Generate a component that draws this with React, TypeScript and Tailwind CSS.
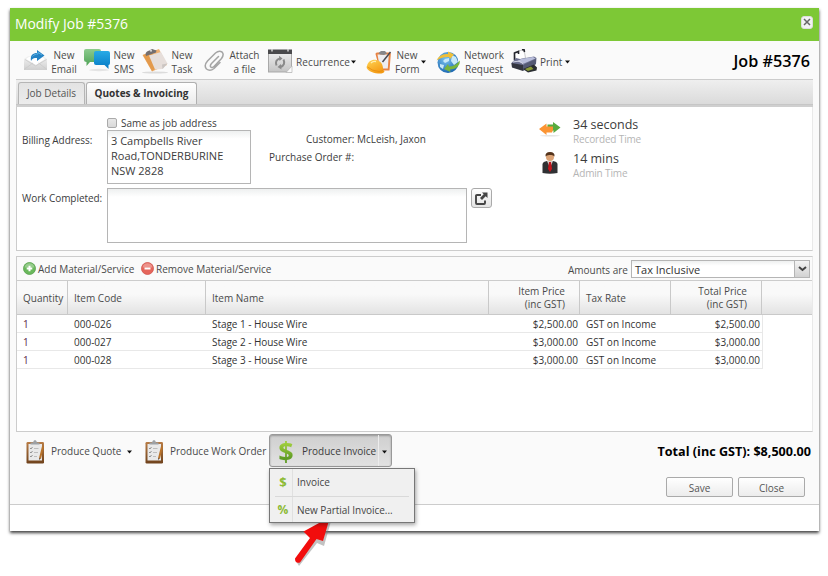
import React from "react";

type IconProps = { className?: string };

const EmailIcon = ({ className }: IconProps) => (
  <svg className={className} width="24" height="24" viewBox="0 0 24 24">
    <defs>
      <linearGradient id="env" x1="0" y1="0" x2="0" y2="1">
        <stop offset="0" stopColor="#f4f4f4" />
        <stop offset="1" stopColor="#cfcfcf" />
      </linearGradient>
    </defs>
    <path d="M0 11 L4 8 L19 8 L23 11 V22 H0Z" fill="url(#env)" />
    <path d="M2 11 L12 17 L21 11 L18 9 H5Z" fill="#fff" />
    <path d="M0 21.500 L9 15 M23 21.500 L14.500 15 M1 11.500 L11.500 18 L22.500 11.500" stroke="#cacaca" strokeWidth="0.800" fill="none" />
    <path d="M7 13 C6 7 9 5 13 5 V2 L20.500 7.500 L13 13 V10 C10 10 8 10.500 7 13Z" fill="#2482c4" />
    <path d="M8.500 8.500 C10 6.500 12 6 14 6 V4.500 L18 7" stroke="#5cb0e2" fill="none" />
  </svg>
);

const SmsIcon = ({ className }: IconProps) => (
  <svg className={className} width="27" height="24" viewBox="0 0 27 24">
    <defs>
      <linearGradient id="smsg" x1="0" y1="0" x2="0" y2="1">
        <stop offset="0" stopColor="#8ccb8e" />
        <stop offset="1" stopColor="#4fa356" />
      </linearGradient>
      <linearGradient id="smsb" x1="0" y1="0" x2="0" y2="1">
        <stop offset="0" stopColor="#28abe6" />
        <stop offset="1" stopColor="#0579c4" />
      </linearGradient>
    </defs>
    <ellipse cx="15" cy="22" rx="10" ry="1.200" fill="#e4e4e4" />
    <path d="M2 1 H15 Q17 1 17 3 V14 H6 L2.500 18 V14 Q0 14 0 12 V3 Q0 1 2 1Z" fill="url(#smsg)" />
    <path d="M12 3 H24 Q26 3 26 5 V15 Q26 17 24.500 17 V21 L20.500 17 H12 Q10 17 10 15 V5 Q10 3 12 3Z" fill="url(#smsb)" />
  </svg>
);

const TaskIcon = ({ className }: IconProps) => (
  <svg className={className} width="27" height="26" viewBox="0 0 27 26">
    <ellipse cx="13" cy="24.500" rx="13" ry="1" fill="#dcdcdc" />
    <path d="M0.500 7 L17 1 L25 17 L10 23.500Z" fill="#efb070" />
    <path d="M1 7 L10 4 L16 19 L10 23Z" fill="#e39a4c" />
    <path d="M7 7.500 L19 4 L25.500 15.500 L20.500 21 L13 21.500Z" fill="#e6deda" />
    <path d="M20.500 21 L20 16.500 L25.500 15.500Z" fill="#cbc5c2" />
    <path d="M3.500 6 Q4 3 7.500 2.500 Q10 0 11.500 1.500 L14.500 2.500 L14 4.500 L4 8Z" fill="#746f70" />
    <circle cx="9" cy="2.700" r="1" fill="#ddd" />
  </svg>
);

const ClipIcon = ({ className }: IconProps) => (
  <svg className={className} width="22" height="24" viewBox="0 0 22 24" fill="none" stroke="#a5a5a5" strokeWidth="1.500" strokeLinecap="round">
    <path d="M14.500 7.500 L7.500 14.500 Q5.500 17 7 18.200 Q8.700 19 10.500 17 L17.500 9.500 Q20.500 5.500 18 3 Q15 1.200 11.500 4 L3.500 12 Q-0.500 16.500 2.500 20 Q6 22.800 10 19.500 L16 13.500" />
  </svg>
);

const RecurIcon = ({ className }: IconProps) => (
  <svg className={className} width="25" height="25" viewBox="0 0 25 25">
    <defs>
      <linearGradient id="rec" x1="0" y1="0" x2="0" y2="1">
        <stop offset="0" stopColor="#ececec" />
        <stop offset="1" stopColor="#c4c4c4" />
      </linearGradient>
    </defs>
    <rect x="0.500" y="4" width="23" height="19" fill="url(#rec)" stroke="#a9a9a9" />
    <path d="M0 0.500 H24 V5 H0Z" fill="#4a4a4c" />
    <path d="M4 0 V2.500 M20 0 V2.500" stroke="#d4d4d4" strokeWidth="1.500" />
    <path d="M24 17 V23.500 H18Z" fill="#fafafa" stroke="#b5b5b5" strokeWidth="0.700" />
    <g fill="none" stroke="#8a8a8a" strokeWidth="2">
      <path d="M8.500 16.500 Q6.500 11 12 9.500" />
      <path d="M15.500 10.500 Q17.800 16 12.500 18" />
    </g>
    <path d="M11 6.800 L14.500 9.500 L11.500 12Z M13 15 L9.500 18 L13.500 20.500Z" fill="#8a8a8a" />
  </svg>
);

const FormIcon = ({ className }: IconProps) => (
  <svg className={className} width="26" height="25" viewBox="0 0 26 25">
    <defs>
      <linearGradient id="hat" x1="0" y1="0" x2="0.600" y2="1">
        <stop offset="0" stopColor="#ffd555" />
        <stop offset="1" stopColor="#f49a13" />
      </linearGradient>
    </defs>
    <path d="M9.500 4 Q9.500 2.500 11 2.500 H23.500 Q25 2.500 24.800 4 L23.500 20.500 H14Z" fill="#e88343" />
    <path d="M11.500 4.500 H22.800 L21.800 18.500 H14Z" fill="#ededf0" />
    <path d="M12.500 3 L15 1 H19 L21 3.500 L18 5 L14 4.500Z" fill="#85868a" />
    <path d="M24.500 2 L18.500 9.500 L16.500 12" stroke="#4a4a50" strokeWidth="1.500" fill="none" />
    <path d="M1 16 C2 11 6.500 9 10.500 10 C15 11 17.500 15 17 20 C20.500 21.500 17 24 12 23.500 C5 23 -1 19 1 16Z" fill="url(#hat)" />
    <path d="M1.500 17 Q6 21 13 21.500 L17 20.500" stroke="#e58c10" strokeWidth="0.800" fill="none" />
    <path d="M5 13 Q7 10.800 10 11.500" stroke="#ffefb0" strokeWidth="1.300" fill="none" />
  </svg>
);

const GlobeIcon = ({ className }: IconProps) => (
  <svg className={className} width="25" height="23" viewBox="0 0 25 23">
    <defs>
      <radialGradient id="glb" cx="0.400" cy="0.350" r="0.700">
        <stop offset="0" stopColor="#7cc4f0" />
        <stop offset="1" stopColor="#1763ae" />
      </radialGradient>
    </defs>
    <circle cx="12" cy="11.500" r="10.500" fill="url(#glb)" />
    <path d="M9 8 L13 7 L13 10 L9 12 L7 10Z M16 4 L20 6 L22 11 L18 14 L15 10Z M4 13 L8 14 L7 18 L4 16Z" fill="#c9e9f8" />
    <path d="M0.500 9.500 Q4 2 12 3 V0.500 L18 3.500 L14 8 L13 6 Q6 5.500 0.500 9.500Z" fill="#efbf3a" />
    <path d="M24 9.500 Q24 18 14 18.500 L14.500 21 L8 18 L12 13 L13 15.500 Q19 15.500 24 9.500Z" fill="#79b53c" />
  </svg>
);

const PrinterIcon = ({ className }: IconProps) => (
  <svg className={className} width="27" height="25" viewBox="0 0 27 25">
    <path d="M3 3.500 L13 0.500 L14.500 9 L5 12Z" fill="#fff" stroke="#b0b0b4" strokeWidth="0.700" />
    <path d="M3.500 11 V4 L7.500 2.500 V5 M11 0.800 L13 0.500 L13.500 3" stroke="#25262d" strokeWidth="1.600" fill="none" />
    <path d="M0.500 14 L5 9 L9 10 L23 7.500 L25.500 9 L25 15 L14 21 L1 18Z" fill="#6c7090" />
    <path d="M6 12.500 L10 10 L22 8 L24.500 9.500 L13 14.500Z" fill="#b9bedb" />
    <path d="M0.500 14 L12 16 V22 L1 18.500Z" fill="#33353f" />
    <path d="M2 13 L8 12 L12.500 15" stroke="#d6d8e6" fill="none" />
    <path d="M12 16 L25 10 V15 L12 22Z" fill="#555a74" />
    <path d="M12 20 L23 15.500 L26 18.500 L25.500 21.500 L17 23.500Z" fill="#2b2e32" />
    <path d="M14 20 L20 17.500 L22.500 20 L17 22Z" fill="#8b9c37" />
  </svg>
);

const ArrowsIcon = ({ className }: IconProps) => (
  <svg className={className} width="23" height="16" viewBox="0 0 23 16">
    <ellipse cx="11" cy="14.800" rx="10" ry="0.800" fill="#e3e3e3" />
    <path d="M8.500 3.500 H14 V1 L21.500 6.500 L14.500 12 V9.500 H8.500Z" fill="#58ab3f" />
    <path d="M14 5.500 H7.500 V2.500 L0 8 L7.500 14 V11.500 H13 Q14.500 9 14 5.500Z" fill="#fb9433" />
  </svg>
);

const PersonIcon = ({ className }: IconProps) => (
  <svg className={className} width="16" height="24" viewBox="0 0 16 24">
    <path d="M0.500 22 V13 Q1 10.500 5 10 H11 Q15 10.500 15.500 13 V22 Q8 23.500 0.500 22Z" fill="#303133" />
    <path d="M5 10 H11 L8 17Z" fill="#d8cfcb" />
    <path d="M7 11 H9 L10 18 L8 21 L6 18Z" fill="#c3161c" />
    <circle cx="8" cy="6" r="4" fill="#dba376" />
    <path d="M3.500 5.500 Q3 1 8 1 Q13 1 12.500 5.500 Q11 3.500 8.500 4 Q5 3.500 3.500 5.500Z" fill="#55341c" />
  </svg>
);

const ClipboardIcon = ({ className }: IconProps) => (
  <svg className={className} width="19" height="24" viewBox="0 0 19 24">
    <defs>
      <linearGradient id="brd" x1="0" y1="0" x2="0" y2="1">
        <stop offset="0" stopColor="#b87c45" />
        <stop offset="1" stopColor="#6f421c" />
      </linearGradient>
    </defs>
    <rect x="0.500" y="2" width="17.500" height="21.500" rx="1.200" fill="url(#brd)" />
    <path d="M2.500 4 H16 V20.500 H2.500Z" fill="#e9e9e9" />
    <path d="M4.500 4.500 V2.500 H7 Q7.500 0 9 0 Q10.500 0 11 2.500 H13.500 V4.500Z" fill="#9da1a5" />
    <path d="M4 8 L5 9 L6.500 7 M4 12 L5 13 L6.500 11 M4 16 L5 17 L6.500 15" stroke="#888" strokeWidth="0.900" fill="none" />
    <path d="M8 8.500 H12.500 M8 12.500 H12 M8 16.500 H11" stroke="#bdbdbd" fill="none" />
    <path d="M17 6.500 L14 18.500" stroke="#b8732c" strokeWidth="2" />
    <path d="M14.500 18 L13.300 20.500 L13.300 18Z" fill="#49301d" />
  </svg>
);

const PopoutIcon = ({ className }: IconProps) => (
  <svg className={className} width="13" height="13" viewBox="0 0 13 13">
    <path d="M6 3 H2 Q1 3 1 4 V11 Q1 12 2 12 H9 Q10 12 10 11 V8.500" fill="none" stroke="#454545" strokeWidth="1.900" />
    <path d="M7 0.500 H12.500 V6 L10.700 4.300 L7 8 L5 6 L8.700 2.300Z" fill="#454545" />
  </svg>
);

const CircleIcon = ({ plus }: { plus?: boolean }) => (
  <svg width="13" height="13" viewBox="0 0 13 13">
    <circle cx="6.500" cy="6.500" r="6" fill={plus ? "#6ab85c" : "#e5655b"} stroke={plus ? "#57a04b" : "#d2544c"} strokeWidth="0.800" />
    <path d="M1.500 5.500 Q2 1.500 6.500 1.300 Q11 1.500 11.500 5.500Z" fill="#fff" opacity="0.300" />
    <path d={plus ? "M6.500 3.700 V9.300 M3.700 6.500 H9.300" : "M3.500 6.500 H9.500"} stroke="#fff" strokeWidth="2" />
  </svg>
);

const Caret = ({ className = "" }: IconProps) => (
  <svg className={className} width="5" height="4" viewBox="0 0 5 4">
    <path d="M0 0.500 H5 L2.500 3.500Z" fill="#111" />
  </svg>
);

const rows = [
  { code: "000-026", name: "Stage 1 - House Wire", price: "$2,500.00" },
  { code: "000-027", name: "Stage 2 - House Wire", price: "$3,000.00" },
  { code: "000-028", name: "Stage 3 - House Wire", price: "$3,000.00" },
];

const headCell = "flex items-center border-r border-[#c9c9c9] pt-px";
const bodyCell = "whitespace-nowrap";

const Toolbar = () => (
  <div className="flex h-[38px] items-center pl-[14px] pr-[9px] text-center leading-[14px] text-[#4a4a4a]">
    <EmailIcon className="-mt-px" />
    <div className="w-8 pt-[3px]">New<br />Email</div>
    <SmsIcon className="ml-1 -mr-px" />
    <div className="w-7 pt-[3px]">New<br />SMS</div>
    <TaskIcon className="ml-1 -mr-px mt-px" />
    <div className="w-7 pt-[3px]">New<br />Task</div>
    <ClipIcon className="ml-2 mt-px" />
    <div className="w-9 whitespace-nowrap pl-px pt-[3px]">Attach<br />a file</div>
    <RecurIcon className="ml-1.5 mt-[3px]" />
    <div className="ml-[3px] w-[54px] pt-[3px] text-left tracking-[0.1px]">Recurrence</div>
    <Caret className="ml-px mt-1" />
    <FormIcon className="ml-[10px] mt-1" />
    <div className="ml-[3px] w-6 pt-[3px]">New<br />Form</div>
    <Caret className="ml-[2px] mt-1" />
    <GlobeIcon className="ml-[10px] mt-1" />
    <div className="ml-[3px] w-[40px] pt-[3px]">Network<br />Request</div>
    <PrinterIcon className="ml-[7px] mt-[3px]" />
    <div className="ml-[2px] w-[23px] pt-[3px] text-left">Print</div>
    <Caret className="ml-[2px] mt-1" />
    <div className="ml-auto pt-[2px] text-[16.200px] font-semibold text-black">Job #5376</div>
  </div>
);

const Tabs = () => (
  <div className="mx-[6px] flex h-[28px] items-end border-b-2 border-t border-b-[#cfcfcf] border-t-[#ccc] bg-linear-to-b from-[#efefef] to-[#dadada]">
    <div className="flex h-full w-full items-end border-b border-[#c6c6c6] pl-[2px]">
      <div className="flex h-[22px] w-[67px] items-center justify-center rounded-t-[3px] border border-b-0 border-[#b5b5b5] bg-linear-to-b from-[#e3e3e3] to-[#ececec] pb-px text-[#555]">
        Job Details
      </div>
      <div className="ml-[1px] flex h-[22px] w-[111px] items-center justify-center rounded-t-[3px] border border-b-0 border-[#b0b0b0] bg-linear-to-b from-white to-[#ebebeb] pb-px font-bold text-[#333]">
        Quotes &amp; Invoicing
      </div>
    </div>
  </div>
);

const Details = () => (
  <div className="mx-[6px] flex h-[144px] border-b border-l border-r border-[#ccc] border-r-[#e9e9e9] bg-white text-[#3c3c3c]">
    <div className="w-[90px] pl-[5px] pt-[26px] leading-[14px] tracking-[-0.050px]">
      <div>Billing Address:</div>
      <div className="mt-[44px] whitespace-nowrap">Work Completed:</div>
    </div>
    <div className="w-[384px] pt-[9px]">
      <div className="flex h-[14px] items-center">
        <div className="h-[10px] w-[10px] rounded-[2px] border border-[#aaa] bg-linear-to-b from-[#e8e8e8] to-[#d9d9d9]"></div>
        <div className="ml-1">Same as job address</div>
      </div>
      <div className="flex">
        <div className="h-[54px] w-[144px] border border-[#b5b5b5] bg-linear-to-b from-[#eef0f0] to-white to-15% pl-[3px] pt-[2px] text-[11px] leading-[15px]">
          3 Campbells River<br />Road,TONDERBURINE<br />NSW 2828
        </div>
        <div className="ml-[18px] pt-[2px] leading-[14px]">
          <div className="pl-[37px]">Customer: McLeish, Jaxon</div>
          <div className="mt-1">Purchase Order #:</div>
        </div>
      </div>
      <div className="mt-1 flex">
        <div className="h-[55px] w-[360px] shrink-0 border border-[#b5b5b5] bg-linear-to-b from-[#eef0f0] to-white to-15%"></div>
        <div className="ml-1 flex h-[20px] w-[21px] shrink-0 items-center justify-center rounded-[3px] border border-[#aaa] bg-linear-to-b from-white to-[#e4e4e4]">
          <PopoutIcon />
        </div>
      </div>
    </div>
    <div className="ml-[48px] pt-[10px]">
      <div className="flex h-[34px]">
        <ArrowsIcon className="mt-1" />
        <div className="ml-[11px] leading-[15px]">
          <div className="text-[12.500px]">34 seconds</div>
          <div className="text-[#b5b5b5] tracking-[-0.150px]">Recorded Time</div>
        </div>
      </div>
      <div className="flex h-[34px]">
        <PersonIcon className="ml-[3px]" />
        <div className="ml-[15px] leading-[15px]">
          <div className="text-[12.500px]">14 mins</div>
          <div className="text-[#b5b5b5] tracking-[-0.150px]">Admin Time</div>
        </div>
      </div>
    </div>
  </div>
);

const Items = () => (
  <div className="mx-[6px] mt-[5px] h-[176px] border border-[#ccc] border-r-[#e9e9e9] bg-white text-[#4a4a4a]">
    <div className="flex h-[24px] items-center border-b border-[#ccc] bg-[#fafafa] pl-[6px] pr-[2px]">
      <CircleIcon plus />
      <div className="ml-[2px] mt-px w-[103px]">Add Material/Service</div>
      <CircleIcon />
      <div className="ml-[2px] mt-px">Remove Material/Service</div>
      <div className="ml-auto mt-[3px]">Amounts are</div>
      <div className="ml-[3px] flex h-[18px] w-[179px] border border-[#b5b5b5] bg-linear-to-b from-[#eef0f0] to-white to-30% text-[11px] leading-[17px] text-[#333]">
        <div className="grow pl-[3px]">Tax Inclusive</div>
        <div className="flex w-[15px] items-center justify-center border-l border-[#b5b5b5] bg-linear-to-b from-[#f4f4f4] to-[#d2d2d2]">
          <svg width="9" height="6" viewBox="0 0 9 6">
            <path d="M1 1 L4.500 4 L8 1" fill="none" stroke="#444" strokeWidth="2" />
          </svg>
        </div>
      </div>
    </div>
    <div className="flex h-[34px] border-b border-[#c9c9c9] bg-linear-to-b from-[#f9f9f9] from-40% to-[#e3e3e3] leading-[13px]">
      <div className={`${headCell} w-[51px] pl-[6px]`}>Quantity</div>
      <div className={`${headCell} w-[138px] pl-[6px]`}>Item Code</div>
      <div className={`${headCell} w-[283px] pl-[6px]`}>Item Name</div>
      <div className={`${headCell} w-[91px] justify-end pr-[14px] pt-[3px] text-right`}>Item Price<br />(inc GST)</div>
      <div className={`${headCell} w-[91px] pl-[6px]`}>Tax Rate</div>
      <div className={`${headCell} w-[91px] justify-end pr-[14px] pt-[3px] text-right`}>Total Price<br />(inc GST)</div>
    </div>
    {rows.map((row) => (
      <div key={row.code} className="flex h-[18px] w-[746px] border-b border-r border-[#e8e8e8] leading-[19px] text-[#333]">
        <div className={`${bodyCell} w-[51px] pl-[6px] text-[#5a2a48]`}>1</div>
        <div className={`${bodyCell} w-[138px] pl-[6px]`}>{row.code}</div>
        <div className={`${bodyCell} w-[283px] pl-[6px] tracking-[-0.050px]`}>{row.name}</div>
        <div className={`${bodyCell} w-[91px] pr-[2px] text-right`}>{row.price}</div>
        <div className={`${bodyCell} w-[91px] pl-[6px]`}>GST on Income</div>
        <div className={`${bodyCell} w-[91px] pr-[2px] text-right`}>{row.price}</div>
      </div>
    ))}
  </div>
);

const InvoiceMenu = () => (
  <div className="absolute -left-px top-[33px] z-10 flex h-[55px] w-[146px] border border-[#777] bg-[#f0f0f0] text-[#444] shadow-[1px_2px_4px_rgba(0,0,0,0.35)]">
    <div className="w-[23px] border-r border-[#e0e0e0] text-center text-[13px] font-bold text-[#8dbb36]">
      <div className="h-[27px] pl-1 leading-[26px]">$</div>
      <div className="h-[27px] pl-1 text-[12px] leading-[28px]">%</div>
    </div>
    <div className="grow">
      <div className="h-[27px] pl-[4px] leading-[27px]">Invoice</div>
      <div className="-ml-[18px] mr-[5px] h-px bg-[#d9d9d9]"></div>
      <div className="pl-[4px] leading-[27px] tracking-[-0.050px]">New Partial Invoice...</div>
    </div>
  </div>
);

const Footer = () => (
  <div className="h-[73px]">
    <div className="flex h-[38px] pl-[16px] pr-[8px] text-[#4a4a4a]">
      <ClipboardIcon className="mt-[8px]" />
      <div className="ml-[6px] w-[73px] whitespace-nowrap leading-[39px]">Produce Quote</div>
      <Caret className="ml-[3px] mt-[18px]" />
      <ClipboardIcon className="ml-[13px] mt-[8px]" />
      <div className="ml-[6px] w-[98px] whitespace-nowrap leading-[39px]">Produce Work Order</div>
      <div className="relative mt-[2px] ml-px flex h-[33px] w-[123px] rounded-[3px] border border-[#999] bg-linear-to-b from-[#cfcfcf] to-[#e2e2e2] text-[#3c3c3c] shadow-[inset_0_1px_2px_#999]">
        <div className="w-[32px] bg-linear-to-b from-[#9ccb3b] from-30% to-[#5f9c24] to-75% bg-clip-text text-center text-[27px] font-bold leading-[32px] text-transparent">$</div>
        <div className="w-[77px] border-r border-[#ededed] leading-[33px]">Produce Invoice</div>
        <Caret className="ml-[3px] mt-[15px]" />
        <InvoiceMenu />
      </div>
      <div className="ml-auto text-[12.600px] font-bold leading-[39px] text-black">Total (inc GST): $8,500.00</div>
    </div>
    <div className="mt-[7px] flex justify-end gap-[5px] pr-[14px] text-[#555]">
      <div className="h-[20px] w-[67px] rounded-[2px] border border-[#aaa] bg-linear-to-b from-white to-[#ececec] text-center leading-[20px]">Save</div>
      <div className="h-[20px] w-[67px] rounded-[2px] border border-[#aaa] bg-linear-to-b from-white to-[#ececec] text-center leading-[20px]">Close</div>
    </div>
  </div>
);

const App = () => {
  return (
    <div className="relative h-[576px] w-[828px] overflow-hidden bg-white pl-[10px] pt-[8px] font-['Open_Sans',sans-serif] text-[10px]">
      <div className="h-[523px] w-[809px] bg-white shadow-[0_2px_3px_rgba(0,0,0,0.75)]">
        <div className="flex h-[33px] items-center justify-between bg-[#7dc836] pl-[5px] pr-[6px] text-[13.900px] text-white">
          <div className="pb-px">Modify Job #5376</div>
          <div className="-mt-[5px] flex h-[13px] w-[12px] items-center justify-center rounded-[3px] border border-[#ddd] bg-[#f2f2f2]">
            <svg width="8" height="8" viewBox="0 0 8 8">
              <path d="M1 1 L7 7 M7 1 L1 7" stroke="#666" strokeWidth="1.500" />
            </svg>
          </div>
        </div>
        <div className="h-[464px] border-b border-[#ccc] bg-[#fafafa]">
          <Toolbar />
          <Tabs />
          <Details />
          <Items />
          <Footer />
        </div>
      </div>
      <svg className="absolute left-[285px] top-[509px]" width="50" height="60" viewBox="0 0 50 60">
        <path d="M13 54 L31 31 L38 34 L45 9 L22 22 L27 27 L10 49Z" fill="#777" opacity="0.450" transform="translate(1 3)" />
        <path d="M10 49.500 L25 29 L18.500 22.500 L45 8 L38 32 L31.500 30 L15 53.500 Q10 55 10 49.500Z" fill="#f20d0d" />
      </svg>
    </div>
  );
};

export default App;
